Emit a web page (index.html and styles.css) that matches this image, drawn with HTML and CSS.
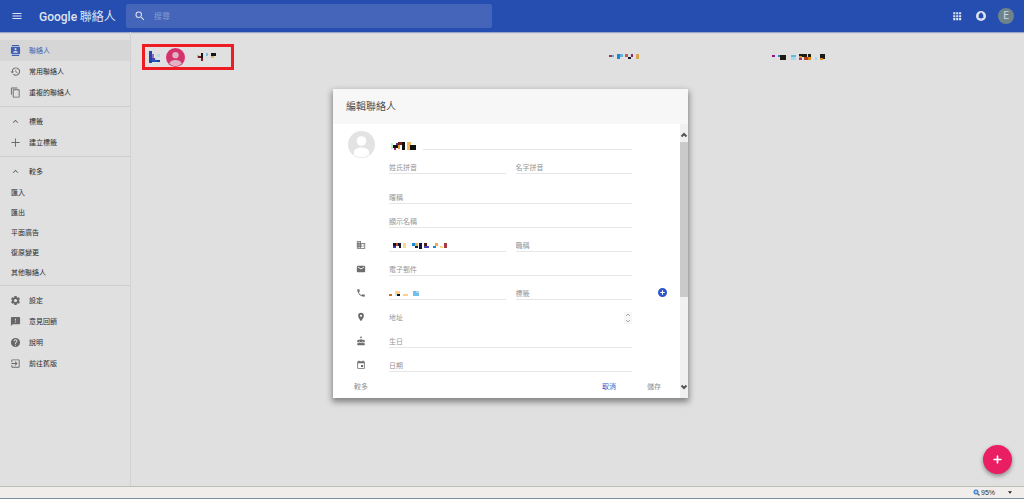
FILE: index.html
```html
<!DOCTYPE html>
<html lang="zh-Hant">
<head>
<meta charset="utf-8">
<title>Google 聯絡人</title>
<link rel="stylesheet" href="styles.css">
</head>
<body>
<header class="topbar">
  <button class="icon-btn menu" aria-label="選單"><svg viewBox="0 0 24 24"><path d="M3 18h18v-2H3v2zm0-5h18v-2H3v2zm0-7v2h18V6H3z"/></svg></button>
  <h1 class="brand"><span class="brand-name">Google</span> <span>聯絡人</span></h1>
  <label class="search">
    <svg viewBox="0 0 24 24"><path d="M15.5 14h-.79l-.28-.27A6.47 6.47 0 0 0 16 9.5 6.5 6.5 0 1 0 9.5 16c1.61 0 3.09-.59 4.23-1.57l.27.28v.79l5 4.99L20.490 19l-4.990-5zm-6 0a4.500 4.500 0 1 1 0-9 4.500 4.500 0 0 1 0 9z"/></svg>
    <input type="search" placeholder="搜尋" aria-label="搜尋">
  </label>
  <nav class="tools">
    <button class="icon-btn" aria-label="應用程式"><svg viewBox="0 0 24 24"><path d="M3 3h5v5H3zM10 3h5v5h-5zM17 3h5v5h-5zM3 10h5v5H3zM10 10h5v5h-5zM17 10h5v5h-5zM3 17h5v5H3zM10 17h5v5h-5zM17 17h5v5h-5z"/></svg></button>
    <button class="icon-btn" aria-label="通知"><svg viewBox="0 0 24 24"><circle cx="12" cy="12" r="12"/><path class="bell" d="M12 20a2 2 0 0 0 2-2h-4a2 2 0 0 0 2 2zm5.500-4.500V11c0-2.800-1.500-5-4-5.600V4.500a1.500 1.500 0 0 0-3 0v.9C8 6 6.500 8.200 6.500 11v4.500L5.500 17h13z"/></svg></button>
    <button class="account" aria-label="帳戶">E</button>
  </nav>
</header>

<div class="layout">
  <nav class="sidebar">
    <a class="item active" href="#"><svg viewBox="0 0 24 24"><path d="M20 0H4v2h16V0zM4 24h16v-2H4v2zM20 4H4a2 2 0 0 0-2 2v12c0 1.100.9 2 2 2h16a2 2 0 0 0 2-2V6a2 2 0 0 0-2-2zm-8 2.750a2.250 2.250 0 1 1 0 4.500 2.250 2.250 0 0 1 0-4.500zM17 17H7v-1.500c0-1.670 3.330-2.500 5-2.500s5 .83 5 2.500V17z"/></svg><span>聯絡人</span></a>
    <a class="item" href="#"><svg viewBox="0 0 24 24"><path d="M13 3a9 9 0 0 0-9 9H1l3.890 3.890.07.14L9 12H6a7 7 0 1 1 2.060 4.940l-1.420 1.420A9 9 0 1 0 13 3zm-1 5v5l4.280 2.540.72-1.210-3.500-2.080V8H12z"/></svg><span>常用聯絡人</span></a>
    <a class="item" href="#"><svg viewBox="0 0 24 24"><path d="M16 1H4a2 2 0 0 0-2 2v14h2V3h12V1zm3 4H8a2 2 0 0 0-2 2v14c0 1.100.9 2 2 2h11a2 2 0 0 0 2-2V7a2 2 0 0 0-2-2zm0 16H8V7h11v14z"/></svg><span>重複的聯絡人</span></a>
    <hr>
    <a class="item" href="#"><svg viewBox="0 0 24 24"><path d="M12 8l-6 6 1.410 1.410L12 10.830l4.590 4.580L18 14z"/></svg><span>標籤</span></a>
    <a class="item" href="#"><svg viewBox="0 0 24 24"><path d="M21 13h-8v8h-2v-8H3v-2h8V3h2v8h8z"/></svg><span>建立標籤</span></a>
    <hr>
    <a class="item" href="#"><svg viewBox="0 0 24 24"><path d="M12 8l-6 6 1.410 1.410L12 10.830l4.590 4.580L18 14z"/></svg><span>較多</span></a>
    <a class="item plain" href="#">匯入</a>
    <a class="item plain" href="#">匯出</a>
    <a class="item plain" href="#">平面廣告</a>
    <a class="item plain" href="#">復原變更</a>
    <a class="item plain" href="#">其他聯絡人</a>
    <hr>
    <a class="item" href="#"><svg viewBox="0 0 24 24"><path d="M19.430 12.980a7.800 7.800 0 0 0 0-1.960l2.110-1.650a.5.5 0 0 0 .12-.64l-2-3.460a.5.5 0 0 0-.61-.22l-2.490 1a7.300 7.300 0 0 0-1.690-.98l-.38-2.650A.49.49 0 0 0 14 2h-4a.49.49 0 0 0-.49.420l-.38 2.650c-.61.250-1.170.590-1.690.980l-2.490-1a.49.49 0 0 0-.61.220l-2 3.460a.49.49 0 0 0 .12.640l2.110 1.650a7.900 7.900 0 0 0 0 1.960l-2.110 1.650a.5.5 0 0 0-.12.640l2 3.460c.12.220.390.300.610.220l2.490-1c.52.400 1.080.730 1.690.980l.38 2.650c.03.240.240.420.490.420h4c.25 0 .46-.18.490-.42l.38-2.650a7.300 7.300 0 0 0 1.690-.98l2.490 1c.23.090.490 0 .610-.22l2-3.460a.5.5 0 0 0-.12-.64l-2.110-1.650zM12 15.500a3.500 3.500 0 1 1 0-7 3.500 3.500 0 0 1 0 7z"/></svg><span>設定</span></a>
    <a class="item" href="#"><svg viewBox="0 0 24 24"><path d="M20 2H4a2 2 0 0 0-2 2v18l4-4h14a2 2 0 0 0 2-2V4a2 2 0 0 0-2-2zm-7 12h-2v-2h2v2zm0-4h-2V6h2v4z"/></svg><span>意見回饋</span></a>
    <a class="item" href="#"><svg viewBox="0 0 24 24"><path d="M12 2a10 10 0 1 0 0 20 10 10 0 0 0 0-20zm1 17h-2v-2h2v2zm2.070-7.750l-.9.920C13.450 12.900 13 13.500 13 15h-2v-.5c0-1.100.450-2.100 1.170-2.830l1.240-1.260A2 2 0 1 0 10 9H8a4 4 0 1 1 7.070 2.250z"/></svg><span>說明</span></a>
    <a class="item" href="#"><svg viewBox="0 0 24 24"><path d="M10.090 15.590L11.500 17l5-5-5-5-1.410 1.410L12.670 11H3v2h9.670l-2.580 2.590zM19 3H5a2 2 0 0 0-2 2v4h2V5h14v14H5v-4H3v4c0 1.100.9 2 2 2h14a2 2 0 0 0 2-2V5a2 2 0 0 0-2-2z"/></svg><span>前往舊版</span></a>
  </nav>

  <main class="contacts">
    <div class="contact">
      <div class="marked">
        <svg class="mosaic" width="12" height="12" viewBox="0 0 12 12"><path fill="#2344b0" d="M0 0h3v12H0z"/><path fill="#8d6fc0" d="M3 3h2v4H3z"/><path fill="#5a3fa4" d="M3 7h3v2H3z"/><path fill="#1b58bd" d="M3 9h5v2H3z"/><path fill="#2a3f9c" d="M8 9h3v2H8z"/><path fill="#b5dce2" d="M8 3h3v3H8zM6 7h2v2H6z"/></svg>
        <svg class="face" viewBox="0 0 24 24"><circle cx="12" cy="12" r="12" fill="#d6336c"/><circle cx="12" cy="9" r="4" fill="#dfb3c3"/><path fill="#dfb3c3" d="M4 20c1-4 5-5 8-5s7 1 8 5a12 12 0 0 1-16 0z"/></svg>
        <svg class="mosaic" width="20" height="8" viewBox="0 0 20 8"><path fill="#a9b9a5" d="M0 2h2v3H0z"/><path fill="#6d2026" d="M1 3h3v2H1z"/><path fill="#151515" d="M4 0h2v5H4zM14 0h5v3h-5z"/><path fill="#781f20" d="M4 5h2v3H4z"/><path fill="#7cc2e6" d="M9 0h2v3H9z"/><path fill="#cfe4e9" d="M9 3h2v2H9z"/><path fill="#e2b65c" d="M14 3h3v2h-3z"/></svg>
      </div>
      <svg class="mosaic" width="30" height="6" viewBox="0 0 30 6"><path fill="#943c44" d="M0 1h3v2H0z"/><path fill="#62b0dc" d="M3 1h2v2H3zM11 0h3v3h-3z"/><path fill="#168bd2" d="M8 0h3v5H8z"/><path fill="#b95e55" d="M16 0h3v3h-3z"/><path fill="#1a1830" d="M19 3h3v2h-3z"/><path fill="#83246f" d="M22 0h2v3h-2z"/><path fill="#d9a34f" d="M27 0h3v5h-3z"/></svg>
      <svg class="mosaic" width="54" height="6" viewBox="0 0 54 6"><path fill="#8c1688" d="M0 1h3v2H0z"/><path fill="#168bd2" d="M6 1h3v2H6z"/><path fill="#1c1c14" d="M8 1h6v5H8zM27 0h8v3h-8zM36 0h3v4h-3zM48 0h5v5h-5z"/><path fill="#65b7df" d="M19 1h5v2h-5z"/><path fill="#a6d8ea" d="M19 3h5v3h-5zM43 3h2v3h-2z"/><path fill="#d78c20" d="M27 2h3v2h-3zM36 3h3v3h-3zM48 4h3v2h-3z"/><path fill="#9a3c7e" d="M27 4h3v2h-3z"/><path fill="#b44024" d="M32 3h4v3h-4z"/></svg>
    </div>
  </main>
</div>

<button class="fab" aria-label="新增聯絡人"><svg viewBox="0 0 24 24"><path d="M19 13h-6v6h-2v-6H5v-2h6V5h2v6h6z"/></svg></button>

<div class="overlay">
  <section class="dialog" role="dialog" aria-labelledby="dialog-title">
    <h2 id="dialog-title" class="dialog-title">編輯聯絡人</h2>
    <div class="dialog-body">
      <form class="form">
        <div class="row first">
          <svg class="avatar" viewBox="0 0 27 27"><circle cx="13.500" cy="13.500" r="13.500" fill="#e3e3e3"/><circle cx="13.500" cy="10" r="4.800" fill="#fff"/><path fill="#fff" d="M6 24v-3c0-3 4-4.500 7.500-4.500S21 18 21 21v3a13 13 0 0 1-15 0z"/></svg>
          <div class="fields">
            <svg class="mosaic name" width="34" height="8" viewBox="0 0 34 8"><path fill="#bff0c8" d="M2 1h2v6H2z"/><path fill="#111" d="M4 3h5v3H4zM13 0h3v8h-3zM21 3h6v5h-6z"/><path fill="#3a36b5" d="M7 1h3v2H7z"/><path fill="#a11f94" d="M5 6h2v2H5z"/><path fill="#7a1c10" d="M9 0h4v3H9z"/><path fill="#f0a030" d="M9 3h2v4H9z"/><path fill="#f5b95a" d="M18 0h4v3h-4zM18 3h3v5h-3z"/></svg>
            <input type="text" aria-label="姓名">
          </div>
        </div>
        <div class="row"><span></span><div class="fields"><input type="text" placeholder="姓氏拼音" aria-label="姓氏拼音"><input type="text" placeholder="名字拼音" aria-label="名字拼音"></div></div>
        <div class="row spaced"><span></span><div class="fields"><input type="text" placeholder="暱稱" aria-label="暱稱"></div></div>
        <div class="row"><span></span><div class="fields"><input type="text" placeholder="顯示名稱" aria-label="顯示名稱"></div></div>
        <div class="row">
          <svg class="icon" viewBox="0 0 24 24"><path d="M12 7V3H2v18h20V7H12zM6 19H4v-2h2v2zm0-4H4v-2h2v2zm0-4H4V9h2v2zm0-4H4V5h2v2zm4 12H8v-2h2v2zm0-4H8v-2h2v2zm0-4H8V9h2v2zm0-4H8V5h2v2zm10 12h-8v-2h2v-2h-2v-2h2v-2h-2V9h8v10zm-2-8h-2v2h2v-2zm0 4h-2v2h2v-2z"/></svg>
          <div class="fields">
            <div class="value"><svg class="mosaic" width="58" height="6" viewBox="0 0 58 6"><path fill="#151538" d="M4 0h3v3H4zM9 0h3v3H9zM30 0h3v6h-3z"/><path fill="#3632b0" d="M4 3h3v2H4z"/><path fill="#c14b20" d="M7 0h2v3H7z"/><path fill="#201a18" d="M10 2h2v3h-2z"/><path fill="#ffd690" d="M14 0h3v5h-3zM51 3h3v2h-3z"/><path fill="#1689d8" d="M23 0h3v3h-3zM44 3h3v2h-3z"/><path fill="#f1aa48" d="M26 0h3v3h-3zM46 0h3v3h-3z"/><path fill="#12284a" d="M26 3h3v2h-3z"/><path fill="#4b211a" d="M35 0h3v3h-3z"/><path fill="#4942b2" d="M35 3h5v2h-5z"/><path fill="#a63b43" d="M55 0h3v5h-3z"/></svg></div>
            <input type="text" placeholder="職稱" aria-label="職稱">
          </div>
        </div>
        <div class="row">
          <svg class="icon" viewBox="0 0 24 24"><path d="M20 4H4a2 2 0 0 0-2 2v12c0 1.100.9 2 2 2h16a2 2 0 0 0 2-2V6a2 2 0 0 0-2-2zm0 4l-8 5-8-5V6l8 5 8-5v2z"/></svg>
          <div class="fields"><input type="email" placeholder="電子郵件" aria-label="電子郵件"></div>
        </div>
        <div class="row">
          <svg class="icon" viewBox="0 0 24 24"><path d="M6.620 10.790a15.200 15.200 0 0 0 6.590 6.590l2.200-2.200c.27-.27.670-.36 1.020-.24 1.120.370 2.330.570 3.570.570.550 0 1 .45 1 1V20c0 .55-.45 1-1 1A17 17 0 0 1 3 4c0-.55.450-1 1-1h3.500c.55 0 1 .45 1 1 0 1.250.2 2.450.570 3.570.110.350.030.740-.25 1.020l-2.200 2.200z"/></svg>
          <div class="fields">
            <div class="value"><svg class="mosaic" width="31" height="6" viewBox="0 0 31 6"><path fill="#c87820" d="M0 3h3v2H0z"/><path fill="#ffd08a" d="M6 0h5v3H6zM14 3h5v2h-5z"/><path fill="#111" d="M8 3h3v2H8z"/><path fill="#c2efff" d="M6 3h2v2H6z"/><path fill="#74bfea" d="M24 0h6v5h-6z"/><path fill="#a9d5ee" d="M27 0h3v2h-3z"/></svg></div>
            <input type="text" placeholder="標籤" aria-label="標籤">
          </div>
          <button type="button" class="add" aria-label="新增電話"><svg viewBox="0 0 24 24"><path d="M12 0a12 12 0 1 0 0 24 12 12 0 0 0 0-24zm6 13.500h-4.500V18h-3v-4.500H6v-3h4.500V6h3v4.500H18z"/></svg></button>
        </div>
        <div class="row">
          <svg class="icon" viewBox="0 0 24 24"><path d="M12 2a7 7 0 0 0-7 7c0 5.250 7 13 7 13s7-7.750 7-13a7 7 0 0 0-7-7zm0 9.500a2.500 2.500 0 1 1 0-5 2.500 2.500 0 0 1 0 5z"/></svg>
          <div class="fields address">
            <input type="text" placeholder="地址" aria-label="地址">
            <span class="stepper"><svg viewBox="0 0 8 12"><path d="M2 4l2-2 2 2M2 8l2 2 2-2"/></svg></span>
          </div>
        </div>
        <div class="row">
          <svg class="icon" viewBox="0 0 24 24"><path d="M12 6a2 2 0 0 0 1.710-3.030L12 0l-1.710 2.970A2 2 0 0 0 12 6zm4.600 9.990l-1.070-1.070-1.080 1.070a3.500 3.500 0 0 1-4.890 0l-1.070-1.070-1.090 1.070A3.400 3.400 0 0 1 3 16.540V21c0 .55.450 1 1 1h16c.55 0 1-.45 1-1v-4.460a3.400 3.400 0 0 1-4.400-.55zM18 9h-5V7h-2v2H6a3 3 0 0 0-3 3v1.540a2 2 0 0 0 3.320 1.380l2.140-2.130 2.130 2.130a2 2 0 0 0 2.820 0l2.140-2.130 2.130 2.130A2 2 0 0 0 21 13.540V12a3 3 0 0 0-3-3z"/></svg>
          <div class="fields"><input type="text" placeholder="生日" aria-label="生日"></div>
        </div>
        <div class="row">
          <svg class="icon" viewBox="0 0 24 24"><path d="M17 12h-5v5h5v-5zM16 1v2H8V1H6v2H5a2 2 0 0 0-2 2v14c0 1.100.9 2 2 2h14a2 2 0 0 0 2-2V5a2 2 0 0 0-2-2h-1V1h-2zm3 18H5V8h14v11z"/></svg>
          <div class="fields"><input type="text" placeholder="日期" aria-label="日期"></div>
        </div>
        <div class="actions">
          <button type="button">較多</button>
          <button type="button" class="cancel">取消</button>
          <button type="submit">儲存</button>
        </div>
      </form>
      <div class="scrollbar">
        <svg viewBox="0 0 8 6"><path d="M1.500 4.500L4 2l2.500 2.500"/></svg>
        <div class="thumb"></div>
        <svg class="down" viewBox="0 0 8 6"><path d="M1.500 1.500L4 4l2.500-2.500"/></svg>
      </div>
    </div>
  </section>
</div>

<footer class="statusbar">
  <button class="zoom"><svg viewBox="0 0 14 14"><path fill="none" stroke="#666" stroke-width="2.500" d="M9 9l4 4"/><circle cx="6" cy="6" r="5" fill="#2f79d0"/><path fill="none" stroke="#fff" stroke-width="1.500" d="M3 6h6M6 3v6"/></svg>95%<svg class="caret" viewBox="0 0 6 4"><path d="M0 0h6L3 4z"/></svg></button>
</footer>
</body>
</html>
```

FILE: styles.css
```css
* { box-sizing: border-box; }

body {
  margin: 0;
  min-height: 100vh;
  display: flex;
  flex-direction: column;
  background: #e0e0e0;
  color: #3c3c3c;
  font: 7px/12px "Noto Sans CJK TC", "Liberation Sans", sans-serif;
}

button {
  padding: 0;
  border: 0;
  background: none;
  color: inherit;
  font: inherit;
}

svg { display: block; flex: none; }

.mosaic { shape-rendering: crispEdges; }

/* Top bar */
.topbar {
  height: 32px;
  display: flex;
  align-items: center;
  background: #264eb1;
  box-shadow: 0 1px 1px #9aa6c8;
  color: #dfe4f0;
}

.icon-btn svg { width: 10px; height: 10px; fill: #dfe4f0; }
.icon-btn.menu { margin-left: 11px; }
.icon-btn.menu svg { width: 12px; height: 12px; }
.icon-btn .bell { fill: #264eb1; }

.brand {
  width: 87px;
  margin: 0 0 0 16px;
  font-size: 12px;
  font-weight: 400;
  line-height: 16px;
  white-space: nowrap;
}

.brand-name { font-family: Roboto, sans-serif; font-weight: 500; }

.search {
  flex: 0 1 366px;
  height: 24px;
  display: flex;
  align-items: center;
  gap: 8px;
  padding: 0 8px;
  border-radius: 2px;
  background: #4465b9;
}

.search svg { width: 12px; height: 12px; fill: #dfe4f0; }

.search input {
  flex: 1;
  min-width: 0;
  padding: 0;
  border: 0;
  outline: 0;
  background: none;
  color: #fff;
  font: inherit;
  font-size: 8px;
}

.search input::placeholder { color: #8499cf; }

.tools {
  display: flex;
  align-items: center;
  gap: 12px;
  margin-left: auto;
  padding-right: 10px;
}

.tools .icon-btn:first-child { margin-right: 2px; }

.account {
  width: 16px;
  height: 16px;
  border-radius: 50%;
  background: #6f838c;
  color: #cfd8dc;
  font: 10px/16px Roboto, sans-serif;
}

/* Sidebar and list */
.layout { flex: 1; display: flex; }

.sidebar {
  flex: none;
  width: 131px;
  padding-top: 8px;
  border-right: 1px solid #d2d2d2;
}

.sidebar hr {
  height: 1px;
  margin: 3px 0 4px;
  border: 0;
  background: #cdcdcd;
}

.item {
  height: 21px;
  display: flex;
  align-items: center;
  gap: 8px;
  padding-left: 10px;
  color: #2c2c2c;
  text-decoration: none;
}

.item svg { width: 11px; height: 11px; fill: #686868; }
.item span { padding-bottom: 2px; }
.item.plain { height: 20px; padding-left: 11px; }
.item.active { background: #d6d6d6; color: #3f5fb5; }
.item.active svg { fill: #3f5fb5; }

.contacts { flex: 1; padding: 12px 11px; }

.contact {
  display: grid;
  grid-template-columns: 467fr 163fr 241fr;
  align-items: center;
}

.marked {
  width: 92px;
  height: 26px;
  display: flex;
  align-items: center;
  padding-left: 4px;
  border: 3px solid #ee1c23;
}

.face { width: 19px; height: 19px; margin: 0 12px 0 5px; }

/* Floating button */
.fab {
  position: absolute;
  right: 12px;
  bottom: 25px;
  width: 29px;
  height: 29px;
  display: grid;
  place-items: center;
  border-radius: 50%;
  background: #ea1e63;
  box-shadow: 0 2px 4px rgba(0, 0, 0, .4);
}

.fab svg {
  width: 13px;
  height: 13px;
  fill: #fff;
  stroke: #fff;
}

/* Dialog */
.overlay {
  position: absolute;
  inset: 0;
  display: flex;
  align-items: flex-start;
  justify-content: center;
  padding: 89px 3px 0 0;
  pointer-events: none;
}

.dialog {
  width: 355px;
  background: #fff;
  box-shadow: 0 3px 6px 1px rgba(0, 0, 0, .42);
  pointer-events: auto;
}

.dialog-title {
  margin: 0;
  padding: 9px 13px 10px;
  background: #f7f7f7;
  color: #505050;
  font-size: 10px;
  font-weight: 400;
  line-height: 16px;
}

.dialog-body { display: flex; }

.form { flex: 1; padding-bottom: 2px; }

.row {
  height: 24px;
  display: grid;
  grid-template-columns: 56px 1fr 48px;
  align-items: end;
}

.row.first { height: 26px; }
.row.spaced { margin-top: 6px; }

.fields {
  min-width: 0;
  display: flex;
  align-items: flex-end;
  gap: 10px;
}

.first .fields { gap: 0; }

.fields input,
.value {
  flex: 1 1 0;
  min-width: 0;
  height: 14px;
  padding: 0;
  border: 0;
  border-bottom: 1px solid #e6e6e6;
  outline: 0;
  background: none;
  color: #333;
  font: inherit;
}

.fields input::placeholder { color: #959595; }
.value { padding-top: 5px; }
.address input { border-bottom-color: transparent; }

.icon {
  width: 10px;
  height: 10px;
  margin: 0 0 2px 23px;
  fill: #6c6c6c;
}

.avatar {
  align-self: start;
  width: 27px;
  height: 27px;
  margin: 7px 0 -8px 15px;
}

.add { justify-self: end; margin: 0 13px 3px 0; }
.add svg { width: 9px; height: 9px; fill: #2b55c8; }

.stepper { background: #f7f7f7; }

.stepper svg {
  width: 8px;
  height: 12px;
  fill: none;
  stroke: #aaa;
}

.actions {
  display: flex;
  align-items: center;
  padding: 8px 19px 4px 21px;
  color: #8f8f8f;
}

.cancel { margin: 0 31px 0 auto; color: #2b55c8; }

.scrollbar {
  width: 8px;
  display: flex;
  flex-direction: column;
  padding: 8px 0;
  background: #f0f0f0;
}

.scrollbar svg {
  width: 8px;
  height: 6px;
  fill: none;
  stroke: #555;
  stroke-width: 2;
}

.scrollbar .down { margin-top: auto; }
.thumb { height: 155px; margin-top: 4px; background: #cacaca; }

/* Status bar */
.statusbar {
  height: 13px;
  display: flex;
  justify-content: flex-end;
  border-top: 1px solid #bdbdb8;
  border-bottom: 1px solid #7890a4;
  background: #f0edeb;
}

.zoom {
  display: flex;
  align-items: center;
  gap: 1px;
  padding-right: 12px;
  color: #333;
  font: 7px/11px "Liberation Sans", sans-serif;
}

.zoom svg { width: 7px; height: 7px; }
.zoom .caret { width: 4px; height: 3px; margin-left: 12px; fill: #222; }
```
